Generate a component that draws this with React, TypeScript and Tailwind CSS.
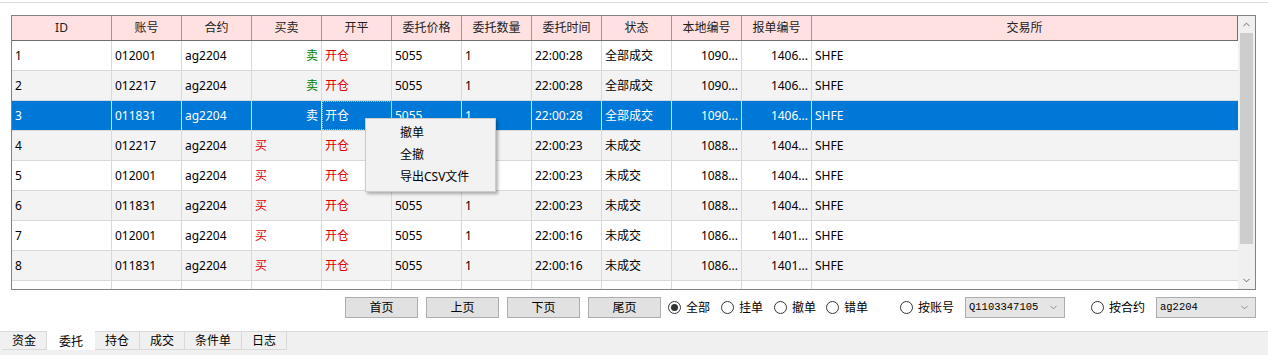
import { ChevronDown, ChevronUp } from "lucide-react";

const FONT = '"Noto Sans", "Noto Sans CJK SC", sans-serif';

type Row = {
  id: string;
  account: string;
  contract: string;
  side: "买" | "卖";
  time: string;
  status: string;
  local: string;
  order: string;
};

const ROWS: Row[] = [
  { id: "1", account: "012001", contract: "ag2204", side: "卖", time: "22:00:28", status: "全部成交", local: "1090...", order: "1406..." },
  { id: "2", account: "012217", contract: "ag2204", side: "卖", time: "22:00:28", status: "全部成交", local: "1090...", order: "1406..." },
  { id: "3", account: "011831", contract: "ag2204", side: "卖", time: "22:00:28", status: "全部成交", local: "1090...", order: "1406..." },
  { id: "4", account: "012217", contract: "ag2204", side: "买", time: "22:00:23", status: "未成交", local: "1088...", order: "1404..." },
  { id: "5", account: "012001", contract: "ag2204", side: "买", time: "22:00:23", status: "未成交", local: "1088...", order: "1404..." },
  { id: "6", account: "011831", contract: "ag2204", side: "买", time: "22:00:23", status: "未成交", local: "1088...", order: "1404..." },
  { id: "7", account: "012001", contract: "ag2204", side: "买", time: "22:00:16", status: "未成交", local: "1086...", order: "1401..." },
  { id: "8", account: "011831", contract: "ag2204", side: "买", time: "22:00:16", status: "未成交", local: "1086...", order: "1401..." },
];

const HEADERS = ["账号", "合约", "买卖", "开平", "委托价格", "委托数量", "委托时间", "状态", "本地编号", "报单编号"];

function Radio({ label, checked, className }: { label: string; checked?: boolean; className?: string }) {
  return (
    <div className={`flex shrink-0 items-center ${className ?? ""}`}>
      <span className="flex h-[13px] w-[13px] items-center justify-center rounded-full border border-[#333] bg-white">
        {checked ? <span className="h-[7px] w-[7px] rounded-full bg-[#333]" /> : null}
      </span>
      <span className="ml-[5px] text-[12px] leading-none">{label}</span>
    </div>
  );
}

function Combo({ value, className }: { value: string; className?: string }) {
  return (
    <div
      className={`flex h-[21px] shrink-0 items-center justify-between border border-[#adadad] bg-[#e5e5e5] pl-[3px] pr-[5px] ${className ?? ""}`}
    >
      <span className="text-[10.5px] leading-none" style={{ fontFamily: '"Liberation Mono", monospace' }}>
        {value}
      </span>
      <ChevronDown size={11} strokeWidth={1.3} className="text-[#555]" />
    </div>
  );
}

function Btn({ label }: { label: string }) {
  return (
    <button
      type="button"
      className="flex h-[21px] w-[73px] items-center justify-center border border-[#adadad] bg-[#e1e1e1] text-[12px] leading-none"
    >
      {label}
    </button>
  );
}

function DataRow({ row, index }: { row: Row; index: number }) {
  const selected = row.id === "3";
  const bg = selected ? "bg-[#0078d7] text-white" : index % 2 === 1 ? "bg-[#f3f3f3]" : "bg-white";
  const red = selected ? "" : "text-[#e00000]";
  const green = selected ? "" : "text-[#008000]";
  const cell = "flex h-full items-center border-r border-[#d9d9d9] px-[3px] whitespace-nowrap overflow-hidden";
  return (
    <div className={`flex h-[30px] border-b border-[#d9d9d9] text-[12px] ${bg}`}>
      <div className={`${cell} w-[100px]`}>{row.id}</div>
      <div className={`${cell} w-[70px]`}>{row.account}</div>
      <div className={`${cell} w-[70px]`}>{row.contract}</div>
      <div className={`${cell} w-[70px] ${row.side === "卖" ? `justify-end ${green}` : red}`}>{row.side}</div>
      <div
        className={`${cell} w-[70px] ${red} ${selected ? "outline outline-1 outline-dotted outline-offset-[-1px] outline-[#9cc6ee]" : ""}`}
      >
        开仓
      </div>
      <div className={`${cell} w-[70px]`}>5055</div>
      <div className={`${cell} w-[70px]`}>1</div>
      <div className={`${cell} w-[70px]`}>{row.time}</div>
      <div className={`${cell} w-[70px]`}>{row.status}</div>
      <div className={`${cell} w-[70px] justify-end`}>{row.local}</div>
      <div className={`${cell} w-[70px] justify-end`}>{row.order}</div>
      <div className={`${cell} flex-1 border-r-0`}>SHFE</div>
    </div>
  );
}

export default function App() {
  return (
    <div className="relative h-[355px] w-[1268px] overflow-hidden bg-white text-black" style={{ fontFamily: FONT }}>
      <div className="h-[3px] border-b border-[#dadada]" />

      <div className="ml-[11px] mt-[12px] flex h-[275px] w-[1245px] border border-[#828282]">
        <div className="flex w-[1226px] flex-col overflow-hidden">
          <div className="flex h-[25px] shrink-0 border-b border-[#6f6f6f] bg-[#ffe1e1] text-[12px] text-[#222]">
            <div className="flex w-[100px] items-center justify-center border-r border-[#9a9a9a]">ID</div>
            {HEADERS.map((h) => (
              <div key={h} className="flex w-[70px] items-center justify-center border-r border-[#9a9a9a]">
                {h}
              </div>
            ))}
            <div className="flex flex-1 items-center justify-center border-r border-[#6f6f6f]">交易所</div>
          </div>
          {ROWS.map((r, i) => (
            <DataRow key={r.id} row={r} index={i} />
          ))}
          <div className="flex h-[8px] bg-white">
            <div className="w-[100px] border-r border-[#d9d9d9]" />
            {HEADERS.map((h) => (
              <div key={h} className="w-[70px] border-r border-[#d9d9d9]" />
            ))}
            <div className="flex-1" />
          </div>
        </div>
        <div className="flex w-[17px] flex-col bg-[#f0f0f0]">
          <div className="flex h-[17px] items-center justify-center">
            <ChevronUp size={11} strokeWidth={2} className="text-[#606060]" />
          </div>
          <div className="mx-[2px] h-[211px] bg-[#cdcdcd]" />
          <div className="flex-1" />
          <div className="flex h-[17px] items-center justify-center">
            <ChevronDown size={11} strokeWidth={2} className="text-[#606060]" />
          </div>
        </div>
      </div>

      <div className="mt-[7px] flex h-[21px] items-center">
        <div className="ml-[345px] flex shrink-0 gap-[8px]">
          <Btn label="首页" />
          <Btn label="上页" />
          <Btn label="下页" />
          <Btn label="尾页" />
        </div>
        <Radio label="全部" checked className="ml-[7px] w-[53px]" />
        <Radio label="挂单" className="w-[53px]" />
        <Radio label="撤单" className="w-[52px]" />
        <Radio label="错单" className="w-[74px]" />
        <Radio label="按账号" className="w-[65px]" />
        <Combo value="Q1103347105" className="w-[100px]" />
        <Radio label="按合约" className="ml-[26px] w-[65px]" />
        <Combo value="ag2204" className="w-[100px]" />
      </div>

      <div className="mt-[13px] h-[24px] border-t border-[#dadada] bg-[#f0f0f0]">
        <div className="flex h-[18px] items-stretch pl-[2px] text-[12px]">
          {["资金", "委托", "持仓", "成交", "条件单", "日志"].map((t) => (
            <div
              key={t}
              className={
                t === "委托"
                  ? "relative -mt-[2px] flex h-[20px] items-center bg-white px-[12px] pt-[3px]"
                  : "flex items-center border border-t-0 border-l-0 border-[#d9d9d9] bg-[#f0f0f0] px-[10px]"
              }
            >
              {t}
            </div>
          ))}
        </div>
      </div>

      <div className="absolute left-[365px] top-[118px] w-[131px] border border-[#cccccc] bg-[#f2f2f2] py-[3px] text-[12px] shadow-[2px_2px_3px_rgba(0,0,0,0.3)]">
        <div className="flex h-[22px] items-center pl-[34px]">撤单</div>
        <div className="flex h-[22px] items-center pl-[34px]">全撤</div>
        <div className="flex h-[22px] items-center pl-[34px]">导出CSV文件</div>
      </div>
    </div>
  );
}
